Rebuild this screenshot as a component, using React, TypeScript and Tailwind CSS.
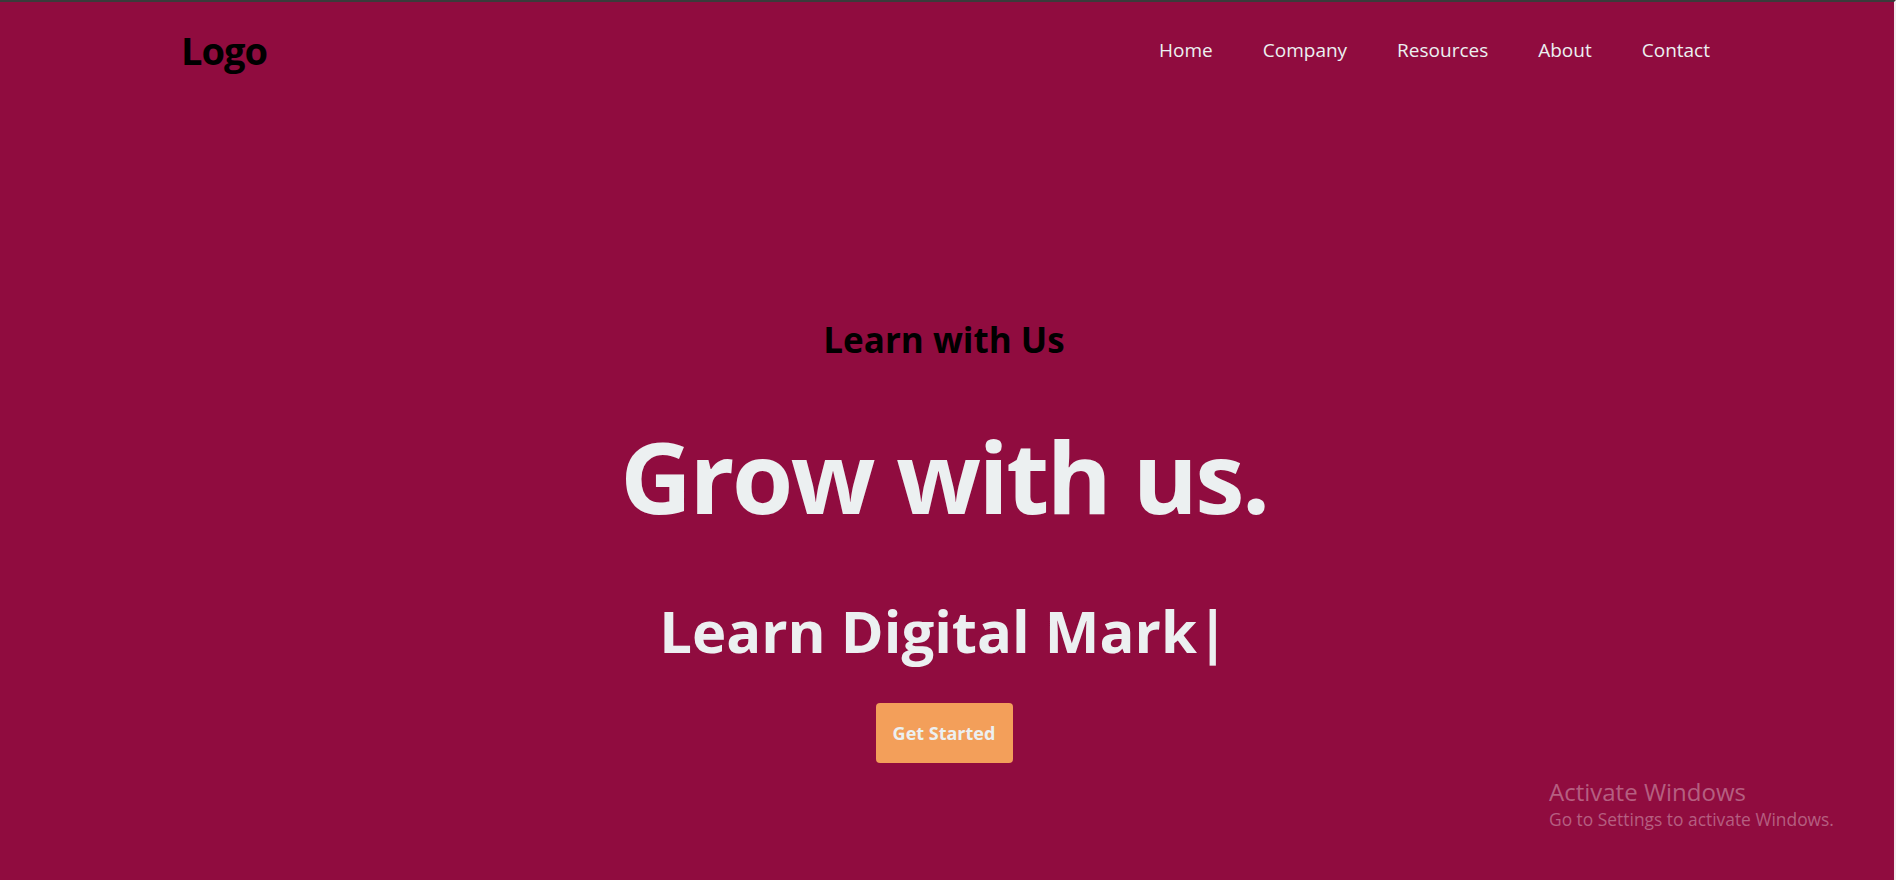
import React from "react";

const links = ["Home", "Company", "Resources", "About", "Contact"];

const App: React.FC = () => {
    return (
        <div className="relative h-[880px] w-full overflow-hidden bg-[#900c3f] border-t-2 border-t-[#3b3b3b] border-r-2 border-r-[#f0f0f0] font-['Open_Sans',sans-serif]">

            {/* NAVBAR */}
            <nav className="flex items-center justify-between h-[98px] pl-[181px] pr-[184px]">
                <div className="text-[38px] font-bold text-black tracking-tight -mt-[2px]">Logo</div>
                <ul className="flex items-center gap-[50px] -mt-[2px]">
                    {links.map((link) => (
                        <li key={link} className="text-[19px] text-[#ecf0f1] cursor-pointer">
                            {link}
                        </li>
                    ))}
                </ul>
            </nav>

            {/* HERO */}
            <section className="flex flex-col items-center text-center pt-[222px] pr-[6px]">
                <h3 className="text-[35px] font-bold text-black leading-none">Learn with Us</h3>
                <h1 className="mt-[69px] text-[99px] font-bold text-[#ecf0f1] leading-none tracking-tight">Grow with us.</h1>
                <h2 className="mt-[77px] text-[58px] font-bold text-[#ecf0f1] leading-none">Learn Digital Mark|</h2>
                <button className="mt-[43px] w-[137px] h-[60px] rounded bg-[#f39f5a] text-[18px] font-bold text-[#ecf0f1]">
                    Get Started
                </button>
            </section>

            {/* WINDOWS WATERMARK */}
            <div className="absolute left-[1549px] top-[774px] text-white/35">
                <div className="text-[24px] leading-[32px]">Activate Windows</div>
                <div className="text-[17.4px] leading-[22px]">Go to Settings to activate Windows.</div>
            </div>
        </div>
    );
};

export default App;
